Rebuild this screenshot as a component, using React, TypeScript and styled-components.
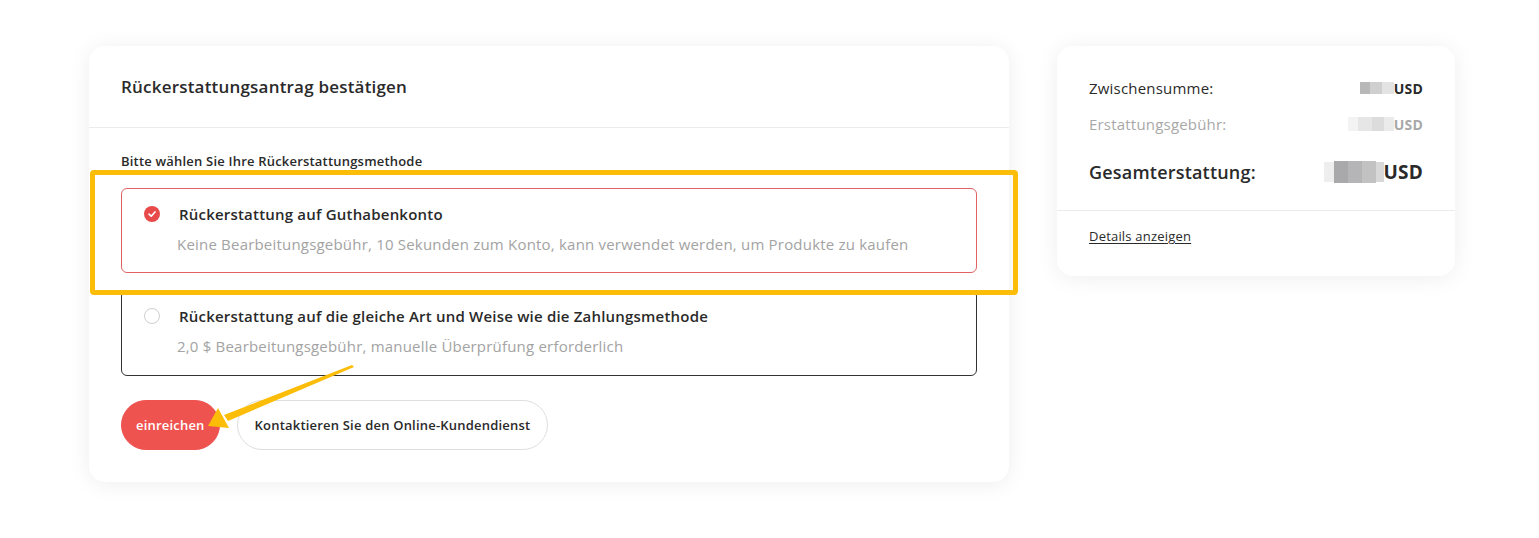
import React from "react";
import styled, { createGlobalStyle } from "styled-components";

const Global = createGlobalStyle`
  html, body { margin: 0; padding: 0; background: #ffffff; }
  body { font-family: "Open Sans", "Noto Sans", sans-serif; color: #222; letter-spacing: 0.2px; }
  * { box-sizing: border-box; }
`;

const Page = styled.div`
  display: flex;
  align-items: flex-start;
  gap: 48px;
  padding: 46px 0 0 89px;
  height: 538px;
`;

const Card = styled.div<{ $w: number }>`
  position: relative;
  width: ${(p) => p.$w}px;
  background: #fff;
  border-radius: 16px;
  box-shadow: 0 2px 22px rgba(0, 0, 0, 0.07);
`;

const CardHeader = styled.div`
  height: 82px;
  display: flex;
  align-items: center;
  padding: 0 32px;
  border-bottom: 1px solid #ececec;
  font-size: 17px;
  font-weight: 600;
  color: #2a2a2a;
`;

const CardBody = styled.div`
  padding: 25px 32px 32px;
  display: flex;
  flex-direction: column;
`;

const Label = styled.div`
  font-size: 13px;
  line-height: 16px;
  font-weight: 600;
  color: #2a2a2a;
  margin-bottom: 19px;
`;

const Options = styled.div`
  display: flex;
  flex-direction: column;
  gap: 17px;
`;

const Option = styled.div<{ $active?: boolean }>`
  display: grid;
  grid-template-columns: 16px 1fr;
  align-content: start;
  column-gap: 19px;
  row-gap: 10px;
  padding: 15px 22px 18px;
  border: 1px solid ${(p) => (p.$active ? "#e06262" : "#333")};
  border-radius: 6px;
  height: ${(p) => (p.$active ? 85 : 86)}px;
`;

const Mark = styled.span<{ $active?: boolean }>`
  width: 16px;
  height: 16px;
  margin-top: 2px;
  border-radius: 50%;
  display: inline-flex;
  align-items: center;
  justify-content: center;
  background: ${(p) => (p.$active ? "#e84a4a" : "#fff")};
  border: ${(p) => (p.$active ? "none" : "1.5px solid #cfcfcf")};
`;

const OptTitle = styled.div`
  font-size: 15px;
  line-height: 20px;
  font-weight: 600;
  color: #2a2a2a;
`;

const OptDesc = styled.div`
  grid-column: 2;
  font-size: 15px;
  line-height: 20px;
  color: #a3a3a3;
  margin-left: -2px;
`;

const Buttons = styled.div`
  display: flex;
  gap: 17px;
  margin-top: 24px;
`;

const Btn = styled.button<{ $primary?: boolean }>`
  height: 50px;
  border-radius: 25px;
  font-family: inherit;
  letter-spacing: inherit;
  font-size: 13px;
  font-weight: 600;
  padding: 0 ${(p) => (p.$primary ? 14 : 17)}px;
  border: 1px solid ${(p) => (p.$primary ? "#ee5350" : "#dedede")};
  background: ${(p) => (p.$primary ? "#ee5350" : "#fff")};
  color: ${(p) => (p.$primary ? "#fff" : "#2a2a2a")};
  cursor: pointer;
`;

const Highlight = styled.div`
  position: absolute;
  left: 1px;
  top: 124px;
  width: 928px;
  height: 125px;
  border: 5px solid #fbbd08;
  border-radius: 4px;
  pointer-events: none;
`;

const ArrowLayer = styled.svg`
  position: absolute;
  left: 0;
  top: 0;
  overflow: visible;
  pointer-events: none;
`;

const SummaryTop = styled.div`
  padding: 32px 32px 25px;
  border-bottom: 1px solid #ececec;
  display: flex;
  flex-direction: column;
`;

const Row = styled.div<{ $kind: "normal" | "muted" | "total" }>`
  display: flex;
  justify-content: space-between;
  align-items: center;
  height: ${(p) => (p.$kind === "total" ? 26 : 20)}px;
  margin-top: ${(p) => (p.$kind === "muted" ? 16 : p.$kind === "total" ? 25 : 0)}px;
  font-size: ${(p) => (p.$kind === "total" ? 18 : 15)}px;
  font-weight: ${(p) => (p.$kind === "total" ? 600 : 400)};
  color: ${(p) => (p.$kind === "muted" ? "#a8a8a8" : "#2a2a2a")};
`;

const Value = styled.span<{ $big?: boolean }>`
  display: inline-flex;
  align-items: center;
  font-weight: 700;
  font-size: ${(p) => (p.$big ? 19 : 14)}px;
`;

const Blur = styled.span`
  display: inline-flex;
  align-items: center;
  filter: blur(0.6px);
`;

const Cell = styled.span<{ $w: number; $h: number; $c: string }>`
  display: inline-block;
  width: ${(p) => p.$w}px;
  height: ${(p) => p.$h}px;
  background: ${(p) => p.$c};
`;

const SummaryBottom = styled.div`
  display: flex;
  padding: 16px 32px 31px;
  line-height: 18px;
`;

const Link = styled.a`
  font-size: 13px;
  line-height: 18px;
  color: #2a2a2a;
  text-decoration: underline;
  text-underline-offset: 2px;
`;

const Check = () => (
  <svg width="10" height="10" viewBox="0 0 10 10">
    <path d="M2 5.2 L4.2 7.2 L8 3" fill="none" stroke="#fff" strokeWidth="1.7" strokeLinecap="round" strokeLinejoin="round" />
  </svg>
);

export default function App() {
  return (
    <>
      <Global />
      <Page>
        <Card $w={920} style={{ height: 436 }}>
          <CardHeader>Rückerstattungsantrag bestätigen</CardHeader>
          <CardBody>
            <Label>Bitte wählen Sie Ihre Rückerstattungsmethode</Label>
            <Options>
              <Option $active>
                <Mark $active>
                  <Check />
                </Mark>
                <OptTitle>Rückerstattung auf Guthabenkonto</OptTitle>
                <OptDesc>
                  Keine Bearbeitungsgebühr, 10 Sekunden zum Konto, kann verwendet werden, um Produkte zu kaufen
                </OptDesc>
              </Option>
              <Option>
                <Mark />
                <OptTitle>Rückerstattung auf die gleiche Art und Weise wie die Zahlungsmethode</OptTitle>
                <OptDesc>2,0 $ Bearbeitungsgebühr, manuelle Überprüfung erforderlich</OptDesc>
              </Option>
            </Options>
            <Buttons>
              <Btn $primary>einreichen</Btn>
              <Btn>Kontaktieren Sie den Online-Kundendienst</Btn>
            </Buttons>
          </CardBody>
          <Highlight />
          <ArrowLayer width="920" height="436" viewBox="0 0 920 436">
            <polygon points="263,319 265,321 139,375 135,369" fill="#fbbd08" />
            <polygon points="119,380 129,362 140,382" fill="#fbbd08" />
          </ArrowLayer>
        </Card>
        <Card $w={398}>
          <SummaryTop>
            <Row $kind="normal">
              <span>Zwischensumme:</span>
              <Value>
                <Blur>
                  <Cell $w={10} $h={12} $c="#b8b8b8" />
                  <Cell $w={12} $h={12} $c="#cfcfcf" />
                  <Cell $w={12} $h={12} $c="#e3e3e3" />
                </Blur>
                USD
              </Value>
            </Row>
            <Row $kind="muted">
              <span>Erstattungsgebühr:</span>
              <Value>
                <Blur>
                  <Cell $w={10} $h={14} $c="#f3f3f3" />
                  <Cell $w={14} $h={14} $c="#e6e6e6" />
                  <Cell $w={12} $h={14} $c="#dcdcdc" />
                  <Cell $w={10} $h={14} $c="#ebebeb" />
                </Blur>
                USD
              </Value>
            </Row>
            <Row $kind="total">
              <span>Gesamterstattung:</span>
              <Value $big>
                <Blur>
                  <Cell $w={10} $h={20} $c="#eeeeee" />
                  <Cell $w={14} $h={22} $c="#a9a9ab" />
                  <Cell $w={14} $h={22} $c="#b5b5b7" />
                  <Cell $w={14} $h={22} $c="#c2c2c2" />
                  <Cell $w={8} $h={20} $c="#d8d8d8" />
                </Blur>
                USD
              </Value>
            </Row>
          </SummaryTop>
          <SummaryBottom>
            <Link>Details anzeigen</Link>
          </SummaryBottom>
        </Card>
      </Page>
    </>
  );
}
